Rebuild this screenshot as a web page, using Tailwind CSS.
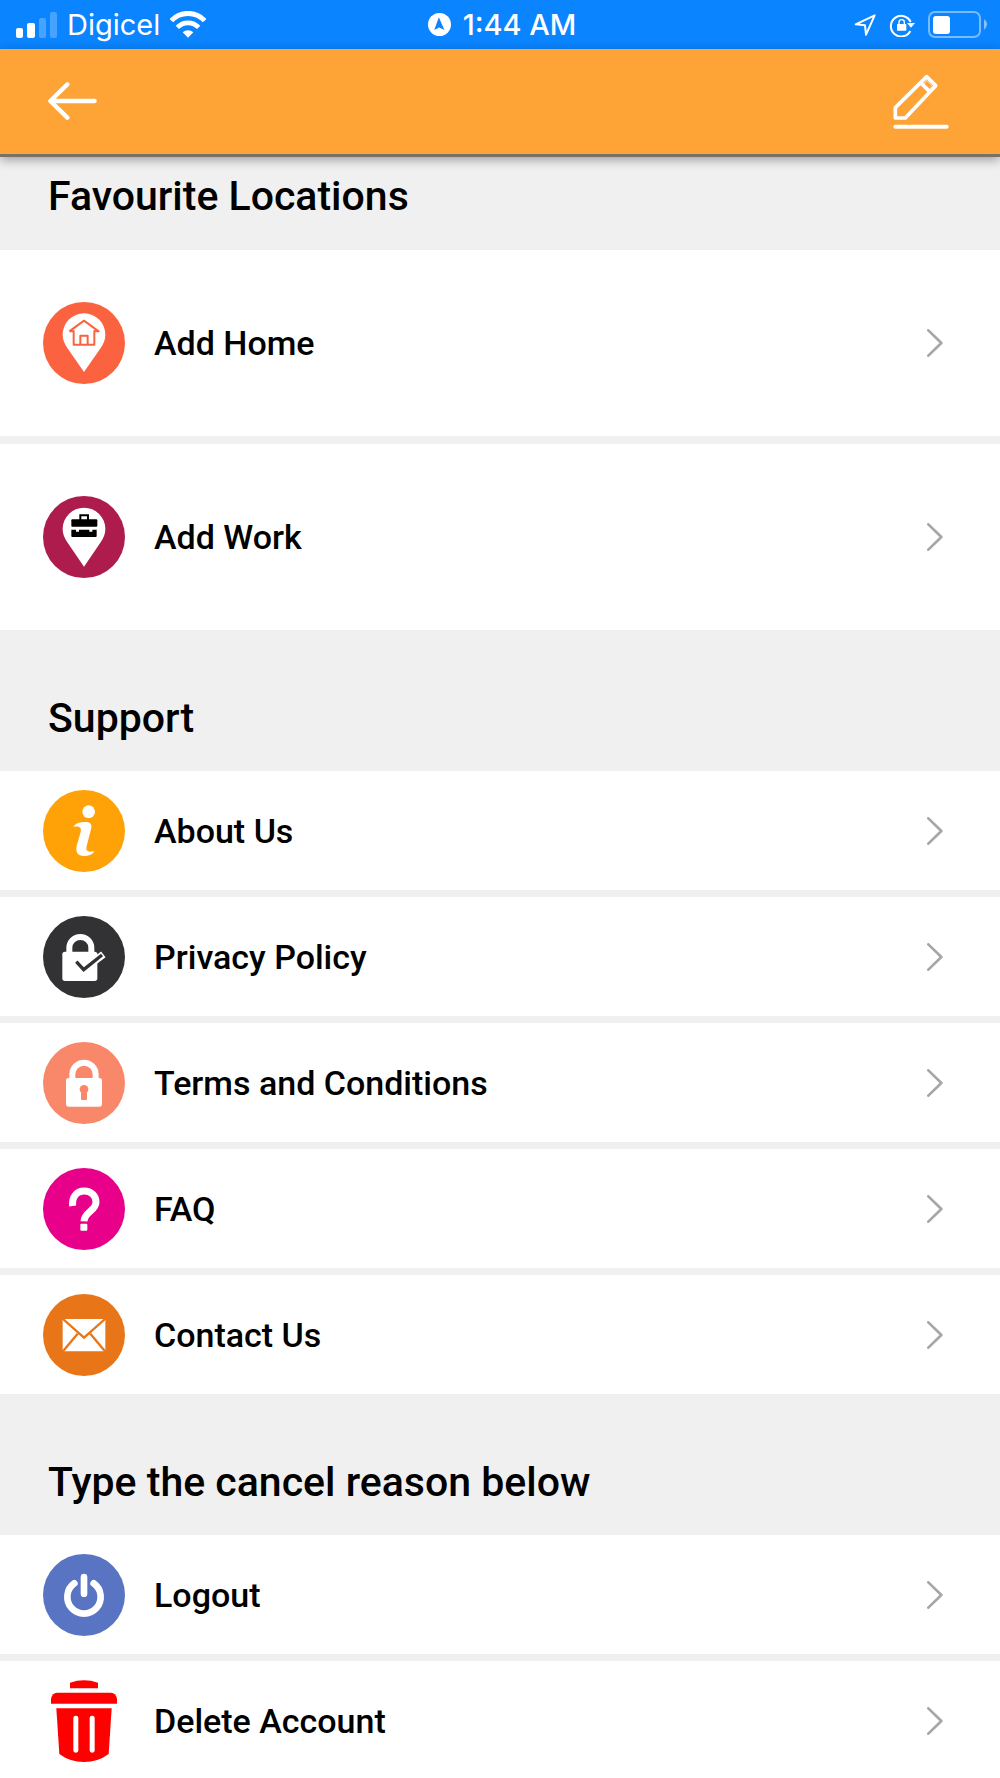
<!DOCTYPE html>
<html lang="en">
<head>
<meta charset="utf-8">
<meta name="viewport" content="width=device-width, initial-scale=1">
<title>Settings</title>
<script src="https://cdn.jsdelivr.net/npm/@tailwindcss/browser@4"></script>
</head>
<body class="bg-[#f0f0f0] font-['Roboto',sans-serif] font-medium text-black">

<svg class="hidden" aria-hidden="true">
  <symbol id="chevron" viewBox="0 0 48 84">
    <path d="M4 4 L43 42 L4 80" fill="none" stroke="#a6a6a6" stroke-width="8" stroke-linecap="round" stroke-linejoin="round"/>
  </symbol>
</svg>

<!-- Status bar -->
<div class="grid h-[49px] grid-cols-3 items-center bg-[#0a84ff] pl-4 pr-3 font-['Inter',sans-serif] text-[29px] leading-8 text-white">
  <div class="flex items-center gap-[10px] font-normal">
    <svg class="h-[26px] w-[41px]" viewBox="0 0 41 26" fill="#fff" aria-hidden="true">
      <rect x="0" y="16" width="7" height="10" rx="2"/>
      <rect x="11" y="11" width="8" height="15" rx="2"/>
      <rect x="23" y="6" width="7" height="20" rx="2" opacity=".25"/>
      <rect x="34" y="0" width="7" height="26" rx="2" opacity=".25"/>
    </svg>
    <span>Digicel</span>
    <svg class="h-[27px] w-9" viewBox="0 0 108 81" fill="none" stroke="#fff" aria-hidden="true">
      <path d="M4 29 C31 0 77 0 104 29" stroke-width="15"/>
      <path d="M22 49 C40 31 68 31 86 49" stroke-width="14"/>
      <path d="M54 80 L38 64 C47 56 61 56 70 64 Z" fill="#fff" stroke="none"/>
    </svg>
  </div>
  <div class="flex items-center justify-center gap-3">
    <svg class="size-[23px]" viewBox="0 0 70 70" aria-hidden="true">
      <circle cx="35" cy="35" r="35" fill="#fff"/>
      <path d="M33 13 L50 52 L34 44 L19 52 Z" fill="#0a84ff"/>
    </svg>
    <span>1:44 AM</span>
  </div>
  <div class="flex items-center justify-end gap-[13px]">
    <svg class="h-[22px] w-[22px]" viewBox="0 0 66 66" fill="none" stroke="#fff" stroke-width="6" stroke-linejoin="round" aria-hidden="true">
      <path d="M62 4 L5 31 L33 34 L36 62 Z"/>
    </svg>
    <svg class="h-6 w-[26px]" viewBox="0 0 78 72" fill="none" stroke="#fff" stroke-width="6" aria-hidden="true">
      <path d="M64 54 A31 31 0 1 1 65 27"/>
      <path d="M54 30 L78 30 L66 44 Z" fill="#fff" stroke="none"/>
      <rect x="24" y="33" width="28" height="20" rx="2" fill="#fff" stroke="none"/>
      <path d="M30 35 V28 a8 8 0 0 1 16 0 V35" stroke-width="4"/>
    </svg>
    <svg class="h-[27px] w-[60px]" viewBox="0 0 60 27" aria-hidden="true">
      <rect x="1" y="1" width="51" height="25" rx="6" fill="none" stroke="#fff" stroke-width="2" opacity=".45"/>
      <rect x="5" y="5" width="17" height="18" rx="3" fill="#fff"/>
      <path d="M56 8 q6 5 0 11 Z" fill="#fff" opacity=".5"/>
    </svg>
  </div>
</div>

<!-- App bar -->
<header class="relative flex h-[108px] items-start justify-between border-b-3 border-[#77716a] bg-[#fea336] pl-12 pr-[51px] shadow-[0_3px_10px_rgba(0,0,0,0.35)]">
  <button type="button" aria-label="Back" class="mt-[33px]">
    <svg class="h-[38px] w-[49px]" viewBox="0 0 147 114" fill="none" stroke="#fff" stroke-width="13" stroke-linecap="round" stroke-linejoin="round">
      <path d="M58 7 L7 57 L58 107 M9 57 H140"/>
    </svg>
  </button>
  <button type="button" aria-label="Edit profile" class="mt-[25px]">
    <svg class="h-14 w-14" viewBox="0 0 168 168" fill="none" stroke="#fff" stroke-width="11" stroke-linejoin="round" stroke-linecap="round">
      <path d="M7 101 L101 8 L128 35 L37 132 H7 Z M83 26 L110 53"/>
      <path d="M7 158 H161" stroke-width="12"/>
      <path d="M102 20 L118 36 L108 46 L94 31 Z" stroke-width="2"/>
      <path d="M103 26 L113 37 L110 40 L98 30 Z" fill="#fea336" stroke="#fea336" stroke-width="2"/>
    </svg>
  </button>
</header>

<main>
  <section>
    <h2 class="px-12 pt-[15px] pb-[30px] text-[41px] leading-12">Favourite Locations</h2>
    <ul class="flex flex-col gap-2">
      <li>
        <a href="#home" class="flex h-[186px] items-center bg-white pl-[43px] pr-[57px] text-[34px] leading-10">
          <svg class="mr-[29px] size-[82px]" viewBox="0 0 246 246" aria-hidden="true">
            <circle cx="123" cy="123" r="123" fill="#fb6340"/>
            <path d="M123 210 L73 138 C64 125 59 112 59 98 A64 64 0 0 1 187 98 C187 112 182 125 173 138 Z" fill="#fff"/>
            <path d="M92 85 V128 H154 V85 M79 88 L123 56 L167 88 H156 M79 88 H90 M112 128 V101 H134 V128" fill="none" stroke="#fb6340" stroke-width="6" stroke-linejoin="round"/>
          </svg>
          <span class="grow">Add Home</span>
          <svg class="h-7 w-4" aria-hidden="true"><use href="#chevron"/></svg>
        </a>
      </li>
      <li>
        <a href="#work" class="flex h-[186px] items-center bg-white pl-[43px] pr-[57px] text-[34px] leading-10">
          <svg class="mr-[29px] size-[82px]" viewBox="0 0 246 246" aria-hidden="true">
            <circle cx="123" cy="123" r="123" fill="#ae1c4d"/>
            <path d="M123 212 L73 139 C64 126 59 113 59 99 A64 64 0 0 1 187 99 C187 113 182 126 173 139 Z" fill="#fff"/>
            <path d="M112 72 V58 H135 V72" fill="none" stroke="#000" stroke-width="6"/>
            <rect x="85" y="70" width="78" height="22" rx="3"/>
            <path d="M85 101 H99 V107 H108 V101 H139 V107 H148 V101 H161 V120 Q161 123 158 123 H88 Q85 123 85 120 Z"/>
          </svg>
          <span class="grow">Add Work</span>
          <svg class="h-7 w-4" aria-hidden="true"><use href="#chevron"/></svg>
        </a>
      </li>
    </ul>
  </section>

  <section>
    <h2 class="px-12 pt-16 pb-[29px] text-[41px] leading-12">Support</h2>
    <ul class="flex flex-col gap-[7px]">
      <li>
        <a href="#about" class="flex h-[119px] items-center bg-white pl-[43px] pr-[57px] text-[34px] leading-10">
          <svg class="mr-[29px] size-[82px]" viewBox="0 0 246 246" aria-hidden="true">
            <circle cx="123" cy="123" r="123" fill="#fea208"/>
            <circle cx="137" cy="65" r="19" fill="#fff"/>
            <path d="M91 110 C98 99 112 96 128 96 C143 96 148 104 144 118 L131 168 C128 183 134 188 154 183 C152 192 136 198 123 198 C104 198 97 186 101 168 L113 126 C116 111 109 108 91 110 Z" fill="#fff"/>
          </svg>
          <span class="grow">About Us</span>
          <svg class="h-7 w-4" aria-hidden="true"><use href="#chevron"/></svg>
        </a>
      </li>
      <li>
        <a href="#privacy" class="flex h-[119px] items-center bg-white pl-[43px] pr-[57px] text-[34px] leading-10">
          <svg class="mr-[29px] size-[82px]" viewBox="0 0 246 246" aria-hidden="true">
            <circle cx="123" cy="123" r="123" fill="#323234"/>
            <path d="M79 112 V95 a33 32 0 0 1 66 0 V112" fill="none" stroke="#fff" stroke-width="18"/>
            <rect x="58" y="107" width="105" height="88" rx="8" fill="#fff"/>
            <path d="M122 160 L181 115" fill="none" stroke="#fff" stroke-width="22"/>
            <path d="M100 137 L122 161 L177 117" fill="none" stroke="#323234" stroke-width="10"/>
          </svg>
          <span class="grow">Privacy Policy</span>
          <svg class="h-7 w-4" aria-hidden="true"><use href="#chevron"/></svg>
        </a>
      </li>
      <li>
        <a href="#terms" class="flex h-[119px] items-center bg-white pl-[43px] pr-[57px] text-[34px] leading-10">
          <svg class="mr-[29px] size-[82px]" viewBox="0 0 246 246" aria-hidden="true">
            <circle cx="123" cy="123" r="123" fill="#f9876a"/>
            <path d="M88 114 V97 a35 35 0 0 1 70 0 V114" fill="none" stroke="#fff" stroke-width="18"/>
            <rect x="69" y="108" width="108" height="86" rx="8" fill="#fff"/>
            <circle cx="123" cy="142" r="13" fill="#f9876a"/>
            <rect x="114" y="142" width="18" height="32" rx="3" fill="#f9876a"/>
          </svg>
          <span class="grow">Terms and Conditions</span>
          <svg class="h-7 w-4" aria-hidden="true"><use href="#chevron"/></svg>
        </a>
      </li>
      <li>
        <a href="#faq" class="flex h-[119px] items-center bg-white pl-[43px] pr-[57px] text-[34px] leading-10">
          <svg class="mr-[29px] size-[82px]" viewBox="0 0 246 246" aria-hidden="true">
            <circle cx="123" cy="123" r="123" fill="#e8008a"/>
            <path d="M89 114 C86 87 101 69 124 69 C145 69 159 84 159 102 C159 130 124 130 123 160" fill="none" stroke="#fff" stroke-width="21"/>
            <rect x="112" y="167" width="21" height="21" rx="3" fill="#fff"/>
          </svg>
          <span class="grow">FAQ</span>
          <svg class="h-7 w-4" aria-hidden="true"><use href="#chevron"/></svg>
        </a>
      </li>
      <li>
        <a href="#contact" class="flex h-[119px] items-center bg-white pl-[43px] pr-[57px] text-[34px] leading-10">
          <svg class="mr-[29px] size-[82px]" viewBox="0 0 246 246" aria-hidden="true">
            <circle cx="123" cy="123" r="123" fill="#e87518"/>
            <rect x="59" y="75" width="128" height="97" rx="4" fill="#fff"/>
            <path d="M60 75 L123 131 L186 75 M60 172 L104 119 M186 172 L142 119" fill="none" stroke="#e87518" stroke-width="7"/>
          </svg>
          <span class="grow">Contact Us</span>
          <svg class="h-7 w-4" aria-hidden="true"><use href="#chevron"/></svg>
        </a>
      </li>
    </ul>
  </section>

  <section>
    <h2 class="px-12 pt-16 pb-[29px] text-[41px] leading-12">Type the cancel reason below</h2>
    <ul class="flex flex-col gap-[7px]">
      <li>
        <a href="#logout" class="flex h-[119px] items-center bg-white pl-[43px] pr-[57px] text-[34px] leading-10">
          <svg class="mr-[29px] size-[82px]" viewBox="0 0 246 246" aria-hidden="true">
            <circle cx="123" cy="123" r="123" fill="#5a74c4"/>
            <path d="M94 88 A50 50 0 1 0 152 88 M123 69 V119" fill="none" stroke="#fff" stroke-width="20" stroke-linecap="round"/>
          </svg>
          <span class="grow">Logout</span>
          <svg class="h-7 w-4" aria-hidden="true"><use href="#chevron"/></svg>
        </a>
      </li>
      <li>
        <a href="#delete" class="flex h-[119px] items-center bg-white pl-[43px] pr-[57px] text-[34px] leading-10">
          <svg class="mr-[29px] size-[82px]" viewBox="0 0 246 246" fill="#fe0000" aria-hidden="true">
            <path d="M81 25 V8 Q123 -6 165 8 V25 Z"/>
            <path d="M24 71 V56 Q28 38 42 38 H204 Q218 38 222 56 V71 Z"/>
            <path d="M40 85 H206 L197 222 Q165 246 123 246 Q81 246 49 222 Z"/>
            <rect x="91" y="107" width="15" height="111" rx="7" fill="#fff"/>
            <rect x="140" y="107" width="15" height="111" rx="7" fill="#fff"/>
          </svg>
          <span class="grow">Delete Account</span>
          <svg class="h-7 w-4" aria-hidden="true"><use href="#chevron"/></svg>
        </a>
      </li>
    </ul>
  </section>
</main>
</body>
</html>
